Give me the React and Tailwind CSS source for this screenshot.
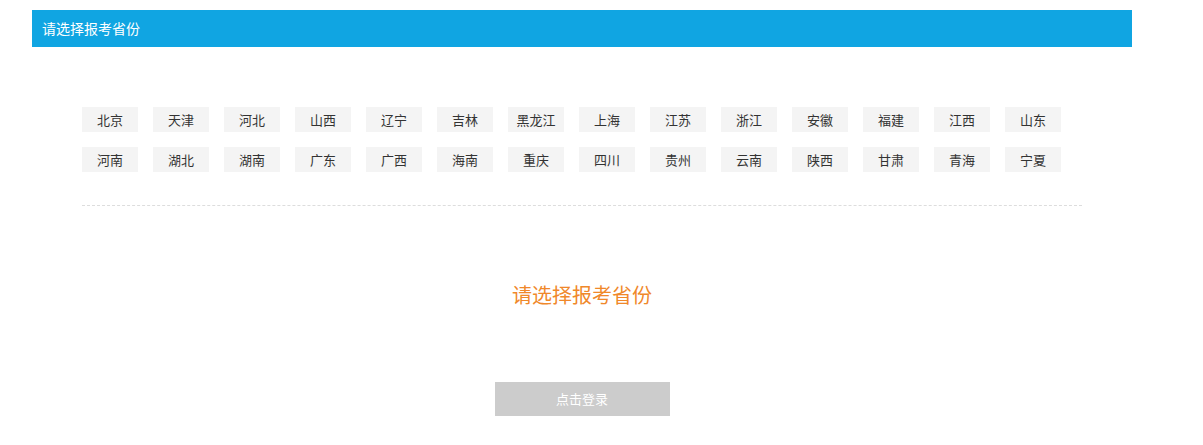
import React, { useState } from 'react';

const provinces = [
    '北京', '天津', '河北', '山西', '辽宁', '吉林', '黑龙江', '上海', '江苏', '浙江', '安徽', '福建', '江西', '山东',
    '河南', '湖北', '湖南', '广东', '广西', '海南', '重庆', '四川', '贵州', '云南', '陕西', '甘肃', '青海', '宁夏',
];

const App = () => {
    const [selected, setSelected] = useState(null);

    return (
        <div className="min-h-[445px] bg-white font-['Microsoft_YaHei','Noto_Sans_CJK_SC',sans-serif]">
            <div className="ml-[32px] w-[1100px] pt-[10px]">
                {/* header bar */}
                <div className="flex h-[37px] items-center bg-[#10a5e2] pl-[10px] text-[14px] text-white">
                    请选择报考省份
                </div>

                <div className="px-[50px] pt-[60px]">
                    <div className="grid grid-cols-[repeat(14,56px)] gap-x-[15px] gap-y-[15px] border-b border-dashed border-[#dddddd] pb-[33px]">
                        {provinces.map((name) => (
                            <button
                                key={name}
                                className={
                                    'h-[25px] w-[56px] text-[13px] ' +
                                    (selected === name ? 'bg-[#10a5e2] text-white' : 'bg-[#f4f4f4] text-[#333333]')
                                }
                                onClick={() => setSelected(name)}
                            >
                                {name}
                            </button>
                        ))}
                    </div>
                </div>

                <div className="mt-[77px] text-center text-[20px] leading-[24px] text-[#f0882a]">
                    {selected ? selected : '请选择报考省份'}
                </div>

                <div className="mt-[75px] flex justify-center">
                    <button className="h-[34px] w-[175px] bg-[#cccccc] text-[13px] text-white">点击登录</button>
                </div>
            </div>
        </div>
    );
};

export default App;
